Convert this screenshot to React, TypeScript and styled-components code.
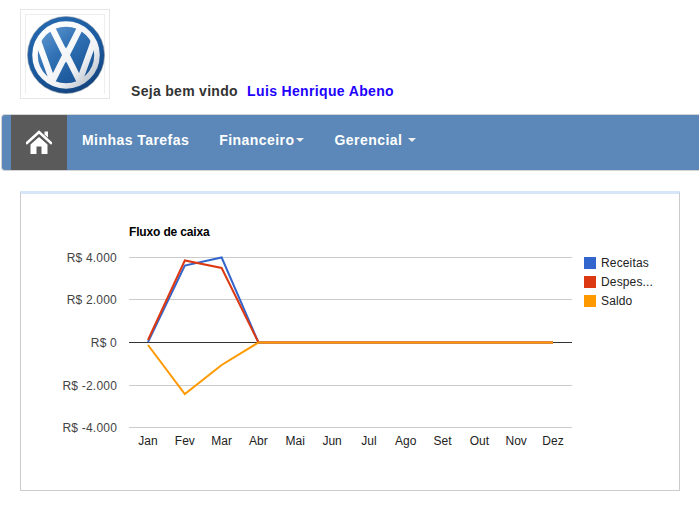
import React from 'react';
import styled, { createGlobalStyle } from 'styled-components';

const GlobalStyle = createGlobalStyle`
  html, body {
    margin: 0;
    padding: 0;
    background: #fff;
    overflow: hidden;
    font-family: "Liberation Sans", Arial, sans-serif;
  }
`;

const Page = styled.div`
  width: 699px;
  height: 516px;
  overflow: hidden;
`;

const Header = styled.header`
  display: flex;
  align-items: flex-end;
  box-sizing: border-box;
  height: 99px;
  padding: 9px 0 0 20px;
`;

const LogoFrame = styled.div`
  box-sizing: border-box;
  width: 90px;
  height: 90px;
  padding: 4px 4px 0;
  border: 1px solid #e6e6e6;
`;

const LogoInner = styled.div`
  box-sizing: border-box;
  width: 80px;
  height: 80px;
  padding: 1px 0 0 1px;
  border: 1px solid #eeeeee;
  border-bottom: 0;
`;

const Welcome = styled.div`
  margin-left: 21px;
  font-size: 14px;
  font-weight: bold;
  line-height: 16px;
  letter-spacing: 0.3px;
  color: #333;
`;

const UserName = styled.span`
  margin-left: 5px;
  letter-spacing: 0.35px;
  color: #2200ff;
`;

const NavBar = styled.nav`
  display: flex;
  align-items: stretch;
  box-sizing: border-box;
  width: 720px;
  height: 57px;
  margin: 15px 0 0 1px;
  padding-left: 9px;
  background: #5b88b8;
  border: 1px solid #d4d4d4;
  border-right: 0;
  border-radius: 4px;
`;

const HomeLink = styled.a`
  display: flex;
  align-items: center;
  justify-content: center;
  box-sizing: border-box;
  width: 56px;
  padding-bottom: 2px;
  background: #5a5a5a;
`;

const NavLink = styled.a<{ $gap: number }>`
  display: flex;
  align-items: center;
  margin-left: ${props => props.$gap}px;
  padding-bottom: 5px;
  font-size: 14px;
  font-weight: bold;
  letter-spacing: 0.45px;
  color: #fff;
`;

const Caret = styled.span<{ $gap: number }>`
  width: 0;
  height: 0;
  margin-left: ${props => props.$gap}px;
  border-top: 4px solid #f0f0f0;
  border-left: 4px solid transparent;
  border-right: 4px solid transparent;
`;

const Panel = styled.section`
  box-sizing: border-box;
  width: 660px;
  height: 300px;
  margin: 20px 0 0 20px;
  background: #fff;
  border: 1px solid #cccccc;
  border-top: 3px solid #d6e5f8;
`;

const months = ['Jan', 'Fev', 'Mar', 'Abr', 'Mai', 'Jun', 'Jul', 'Ago', 'Set', 'Out', 'Nov', 'Dez'];
const monthX = (i: number) => 148 + i * 36.82;

const gridLines = [
  { y: 257.5, label: 'R$ 4.000' },
  { y: 299.5, label: 'R$ 2.000' },
  { y: 385.5, label: 'R$ -2.000' },
  { y: 427.5, label: 'R$ -4.000' },
];

const flat = Array(9).fill(342.5) as number[];

const series = [
  { name: 'Receitas', color: '#3366cc', points: [342, 265.5, 257.5, ...flat] },
  { name: 'Despes...', color: '#dc3912', points: [340, 260.5, 268, ...flat] },
  { name: 'Saldo', color: '#ff9900', points: [345, 394, 365, ...flat] },
];

const toPolyline = (points: number[]) =>
  points.map((y, i) => `${monthX(i)},${y}`).join(' ');

const VwLogo = () => (
  <svg width="78" height="78" viewBox="-39 -39 78 78" style={{ display: 'block' }}>
    <defs>
      <radialGradient id="ringBlue" cx="40%" cy="30%" r="75%">
        <stop offset="0%" stopColor="#2a72b8" />
        <stop offset="70%" stopColor="#1b5a9e" />
        <stop offset="100%" stopColor="#123f78" />
      </radialGradient>
      <linearGradient id="innerBlue" x1="0" y1="0" x2="0.8" y2="1">
        <stop offset="0%" stopColor="#6ea3d8" />
        <stop offset="45%" stopColor="#3273b6" />
        <stop offset="100%" stopColor="#124c8e" />
      </linearGradient>
      <linearGradient id="silver" gradientUnits="userSpaceOnUse" x1="-25" y1="-25" x2="30" y2="30">
        <stop offset="0%" stopColor="#ffffff" />
        <stop offset="65%" stopColor="#f0f2f5" />
        <stop offset="100%" stopColor="#b0b8c2" />
      </linearGradient>
      <clipPath id="innerClip">
        <circle r="30" />
      </clipPath>
    </defs>
    <circle r="38.5" fill="url(#ringBlue)" stroke="#8d99a8" strokeWidth="0.6" />
    <circle r="31" fill="url(#innerBlue)" stroke="url(#silver)" strokeWidth="5.5" />
    <g clipPath="url(#innerClip)" fill="none" stroke="url(#silver)" strokeWidth="6.2" strokeLinejoin="miter" strokeMiterlimit="8">
      <polyline points="-15.5,-30 0,1 15.5,-30" />
      <polyline points="-29,-17 -13.5,26 0,-1 13.5,26 29,-17" />
    </g>
  </svg>
);

const HomeIcon = () => (
  <svg width="26" height="24" viewBox="0 0 26 24" style={{ display: 'block' }}>
    <path d="M1 13 L13 2 L25 13" fill="none" stroke="#fff" strokeWidth="2.6" strokeLinecap="square" />
    <path d="M18.5 1.5 H22 V7.5 L18.5 4.5 Z" fill="#fff" />
    <path d="M4.5 14.5 L13 7 L21.5 14.5 V24 H15.5 V16.5 H10.5 V24 H4.5 Z" fill="#fff" />
  </svg>
);

const CashFlowChart = () => (
  <svg width="658" height="296" viewBox="21 194 658 296" style={{ display: 'block' }} fontFamily='"Liberation Sans", Arial, sans-serif' fontSize="12">
    <text x="129" y="236" fontWeight="bold" fill="#000" letterSpacing="-0.15">Fluxo de caixa</text>

    {gridLines.map(line => (
      <g key={line.label}>
        <line x1="129" x2="572" y1={line.y} y2={line.y} stroke="#cccccc" />
        <text x="117" y={line.y + 4.5} textAnchor="end" fill="#444" letterSpacing="0.2">{line.label}</text>
      </g>
    ))}
    <text x="117" y="347" textAnchor="end" fill="#444" letterSpacing="0.2">R$ 0</text>

    <line x1="129" x2="572" y1="342.5" y2="342.5" stroke="#333" />

    {series.map(item => (
      <polyline key={item.name} points={toPolyline(item.points)} fill="none" stroke={item.color} strokeWidth="2" />
    ))}

    {months.map((month, i) => (
      <text key={month} x={monthX(i)} y="445" textAnchor="middle" fill="#222">{month}</text>
    ))}

    {series.map((item, i) => (
      <g key={item.name}>
        <rect x="584" y={257 + i * 19} width="12" height="12" fill={item.color} />
        <text x="601" y={267 + i * 19} fill="#222" letterSpacing="0.15">{item.name}</text>
      </g>
    ))}
  </svg>
);

const App = () => (
  <Page>
    <GlobalStyle />
    <Header>
      <LogoFrame>
        <LogoInner>
          <VwLogo />
        </LogoInner>
      </LogoFrame>
      <Welcome>
        Seja bem vindo <UserName>Luis Henrique Abeno</UserName>
      </Welcome>
    </Header>
    <NavBar>
      <HomeLink><HomeIcon /></HomeLink>
      <NavLink $gap={15}>Minhas Tarefas</NavLink>
      <NavLink $gap={30}>Financeiro<Caret $gap={2} /></NavLink>
      <NavLink $gap={30}>Gerencial<Caret $gap={6} /></NavLink>
    </NavBar>
    <Panel>
      <CashFlowChart />
    </Panel>
  </Page>
);

export default App;
